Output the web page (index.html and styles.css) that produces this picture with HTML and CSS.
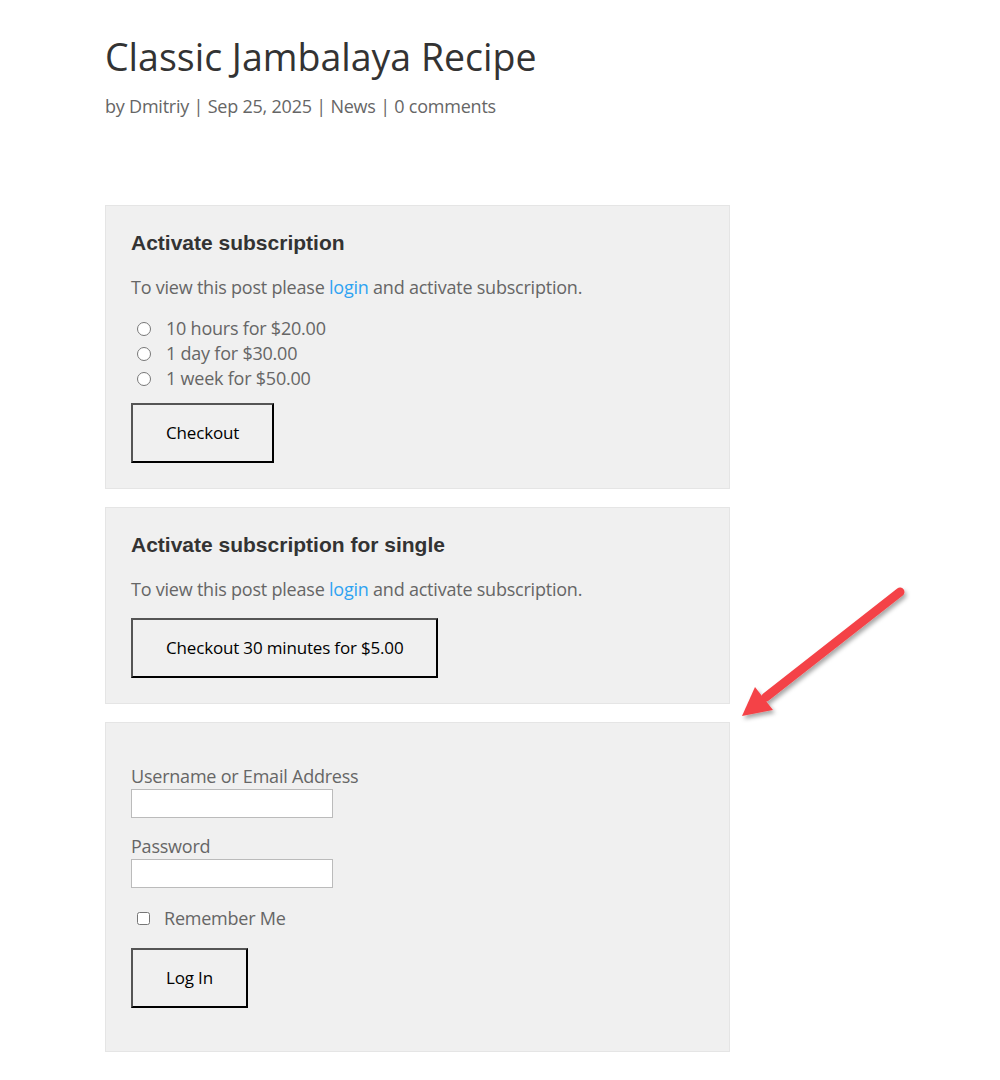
FILE: index.html
```html
<!DOCTYPE html>
<html>
<head>
<meta charset="utf-8">
<link rel="stylesheet" href="styles.css">
</head>
<body>
<div class="page">
  <header class="post-header">
    <h1 class="post-title">Classic Jambalaya Recipe</h1>
    <p class="post-meta">by Dmitriy | Sep 25, 2025 | News | 0 comments</p>
  </header>

  <section class="box">
    <h3 class="box-title">Activate subscription</h3>
    <p class="box-text">To view this post please <a href="#" class="link">login</a> and activate subscription.</p>
    <ul class="options">
      <li class="option"><input type="radio" name="plan" class="radio"><span>10 hours for $20.00</span></li>
      <li class="option"><input type="radio" name="plan" class="radio"><span>1 day for $30.00</span></li>
      <li class="option"><input type="radio" name="plan" class="radio"><span>1 week for $50.00</span></li>
    </ul>
    <button class="btn btn-plans">Checkout</button>
  </section>

  <section class="box box-single">
    <h3 class="box-title">Activate subscription for single</h3>
    <p class="box-text">To view this post please <a href="#" class="link">login</a> and activate subscription.</p>
    <button class="btn btn-single">Checkout 30 minutes for $5.00</button>
  </section>

  <section class="box box-login">
    <form class="login-form">
      <label class="field-label">Username or Email Address</label>
      <input type="text" class="field-input">
      <label class="field-label field-label-2">Password</label>
      <input type="password" class="field-input">
      <label class="remember"><input type="checkbox" class="checkbox"><span>Remember Me</span></label>
      <button type="button" class="btn btn-login">Log In</button>
    </form>
  </section>
</div>

<svg class="arrow" width="210" height="170" viewBox="0 0 210 170">
  <defs>
    <filter id="sh" x="-20%" y="-20%" width="140%" height="140%">
      <feDropShadow dx="2" dy="3" stdDeviation="2" flood-color="#000" flood-opacity="0.35"/>
    </filter>
  </defs>
  <g filter="url(#sh)">
    <line x1="180" y1="22" x2="46" y2="127" stroke="#f44347" stroke-width="9" stroke-linecap="round"/>
    <polygon points="22,146 35,117 53,140" fill="#f44347"/>
  </g>
</svg>
</body>
</html>
```

FILE: styles.css
```css
* { box-sizing: border-box; }
html, body { margin: 0; padding: 0; background: #fff; }
body {
  font-family: "Open Sans", "Liberation Sans", Arial, sans-serif;
  color: #666;
  font-size: 18px;
  letter-spacing: -0.22px;
  position: relative;
}
.page {
  width: 625px;
  margin-left: 105px;
  padding-top: 32px;
}
.post-title {
  margin: 0;
  font-weight: 400;
  font-size: 37.5px;
  letter-spacing: 0;
  line-height: 50px;
  color: #333;
}
.post-meta {
  margin: 12px 0 0 0;
  font-size: 18px;
  line-height: 25px;
  color: #666;
}
.post-header { margin-bottom: 86px; }
.box {
  background: #f0f0f0;
  border: 1px solid #e5e5e5;
  padding: 24px 25px 25px 25px;
  margin-bottom: 18px;
}
.box-title {
  margin: 0;
  font-family: "Liberation Sans", Arial, sans-serif;
  font-weight: 700;
  font-size: 21px;
  letter-spacing: 0;
  line-height: 25px;
  color: #333;
}
.box-text {
  margin: 18px 0 0 0;
  line-height: 28px;
}
.link { color: #2ea3f2; text-decoration: none; }
.options {
  list-style: none;
  margin: 15px 0 0 0;
  padding: 0;
}
.option {
  display: flex;
  align-items: center;
  line-height: 25px;
}
.radio {
  margin: 0 15px 0 6px;
  width: 14px;
  height: 14px;
}
.btn {
  display: inline-block;
  font-family: "Open Sans", sans-serif;
  font-size: 17px;
  letter-spacing: -0.17px;
  color: #000;
  background: #f0f0f0;
  border: 2px solid #000;
  border-top-color: #555;
  border-left-color: #555;
  padding: 16px 33px;
  line-height: 24px;
  cursor: pointer;
}
.btn-plans { margin-top: 12px; }
.btn-single { margin-top: 15px; }
.box-login { padding-top: 41px; padding-bottom: 43px; margin-bottom: 0; }
.login-form { display: flex; flex-direction: column; align-items: flex-start; }
.field-label { line-height: 25px; }
.field-label-2 { margin-top: 16px; }
.field-input {
  width: 202px;
  height: 29px;
  border: 1px solid #bbb;
  background: #fff;
  margin: 0;
}
.remember {
  display: flex;
  align-items: center;
  margin-top: 18px;
  line-height: 25px;
}
.checkbox { margin: 0 14px 0 6px; width: 13px; height: 13px; }
.btn-login { margin-top: 17px; }
.arrow {
  position: absolute;
  left: 720px;
  top: 570px;
}
```
